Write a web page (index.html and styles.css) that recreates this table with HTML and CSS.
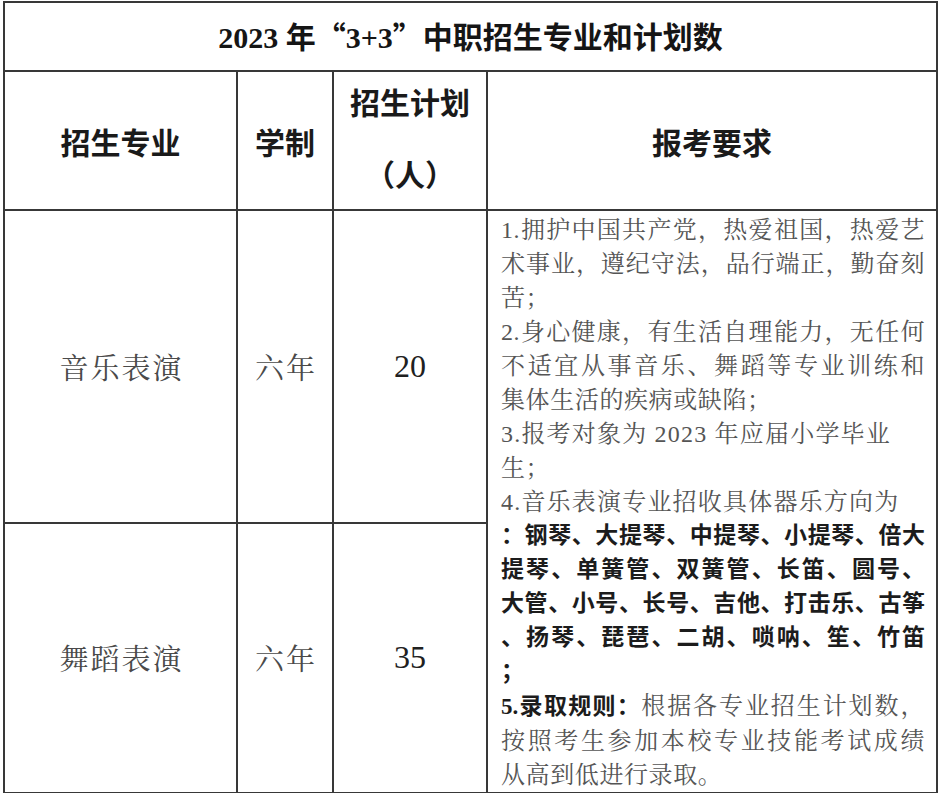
FILE: index.html
```html
<!DOCTYPE html>
<html lang="zh-CN">
<head>
<meta charset="utf-8">
<title>2023年“3+3”中职招生专业和计划数</title>
<link rel="stylesheet" href="styles.css">
</head>
<body>
<div class="page">
  <table class="plan">
    <colgroup><col class="c1"><col class="c2"><col class="c3"><col class="c4"></colgroup>
    <thead>
      <tr class="r-title">
        <th colspan="4" class="title">2023 年<span class="q">“</span>3+3<span class="q">”</span>中职招生专业和计划数</th>
      </tr>
      <tr class="r-head">
        <th>招生专业</th>
        <th>学制</th>
        <th class="plan-head"><div class="l1">招生计划</div><div class="l2">（人）</div></th>
        <th>报考要求</th>
      </tr>
    </thead>
    <tbody>
      <tr class="r-music">
        <td class="major">音乐表演</td>
        <td class="years">六年</td>
        <td class="num">20</td>
        <td class="req" rowspan="2">
          <p class="item">
            <span class="ln j">1.拥护中国共产党，热爱祖国，热爱艺</span>
            <span class="ln j">术事业，遵纪守法，品行端正，勤奋刻</span>
            <span class="ln">苦；</span>
          </p>
          <p class="item">
            <span class="ln j">2.身心健康，有生活自理能力，无任何</span>
            <span class="ln j">不适宜从事音乐、舞蹈等专业训练和</span>
            <span class="ln">集体生活的疾病或缺陷；</span>
          </p>
          <p class="item">
            <span class="ln wide">3.报考对象为 2023 年应届小学毕业</span>
            <span class="ln">生；</span>
          </p>
          <p class="item">
            <span class="ln wide">4.音乐表演专业招收具体器乐方向为</span>
            <span class="ln j strong">：钢琴、大提琴、中提琴、小提琴、倍大</span>
            <span class="ln j strong">提琴、单簧管、双簧管、长笛、圆号、</span>
            <span class="ln j strong">大管、小号、长号、吉他、打击乐、古筝</span>
            <span class="ln j strong">、扬琴、琵琶、二胡、唢呐、笙、竹笛</span>
            <span class="ln strong">；</span>
          </p>
          <p class="item">
            <span class="ln j"><b class="strong">5.录取规则：</b>根据各专业招生计划数，</span>
            <span class="ln j">按照考生参加本校专业技能考试成绩</span>
            <span class="ln">从高到低进行录取。</span>
          </p>
        </td>
      </tr>
      <tr class="r-dance">
        <td class="major">舞蹈表演</td>
        <td class="years">六年</td>
        <td class="num">35</td>
      </tr>
    </tbody>
  </table>
</div>
</body>
</html>
```

FILE: styles.css
```css
* {
  box-sizing: border-box;
}

html,
body {
  margin: 0;
  background: #ffffff;
}

body {
  font-family: "Liberation Serif", "Noto Serif CJK SC", "Noto Sans CJK SC", serif;
  color: #222222;
}

.page {
  padding: 1px 0 0 3px;
}

.plan {
  border-collapse: collapse;
  table-layout: fixed;
  width: 935px;
}

.plan th,
.plan td {
  border: 2px solid #383838;
  padding: 0;
  text-align: center;
  vertical-align: middle;
}

.c1 { width: 233px; }
.c2 { width: 96px; }
.c3 { width: 154px; }
.c4 { width: 450px; }

.r-title { height: 69px; }
.r-head { height: 139px; }
.r-music { height: 312px; }
.r-dance { height: 270px; }

.plan th {
  font-family: "Noto Sans CJK SC", sans-serif;
  font-weight: 700;
  font-size: 30px;
  color: #1a1a1a;
  line-height: 1;
}

.plan th.title {
  font-family: "Liberation Serif", "Noto Sans CJK SC", sans-serif;
  font-size: 30px;
  color: #151515;
}

.title .q {
  font-family: "Noto Sans CJK SC", sans-serif;
}

.plan th.plan-head {
  vertical-align: top;
}

.plan-head .l1 {
  line-height: 58px;
}

.plan-head .l2 {
  line-height: 70px;
  margin-top: 8px;
}

.major,
.years {
  font-family: "Noto Serif CJK SC", "Noto Sans CJK SC", serif;
  font-size: 29px;
  letter-spacing: 2px;
  color: #4a4a4a;
  text-indent: 2px;
}

.num {
  font-family: "Liberation Serif", serif;
  font-size: 32px;
  color: #202020;
}

.plan td.req {
  vertical-align: top;
  text-align: left;
  padding: 2px 11px 0 13px;
}

.item {
  margin: 0;
}

.ln {
  display: block;
  font-size: 24px;
  line-height: 34px;
  letter-spacing: 0.6px;
  color: #555555;
}

.ln.j {
  text-align: justify;
  text-align-last: justify;
}

.ln.wide {
  letter-spacing: 1.2px;
}

.strong {
  font-family: "Liberation Serif", "Noto Sans CJK SC", sans-serif;
  font-weight: 700;
  color: #1c1c1c;
}

.ln.strong {
  font-size: 23px;
  letter-spacing: 0;
}

b.strong {
  font-size: 23px;
  letter-spacing: 0;
}
```
